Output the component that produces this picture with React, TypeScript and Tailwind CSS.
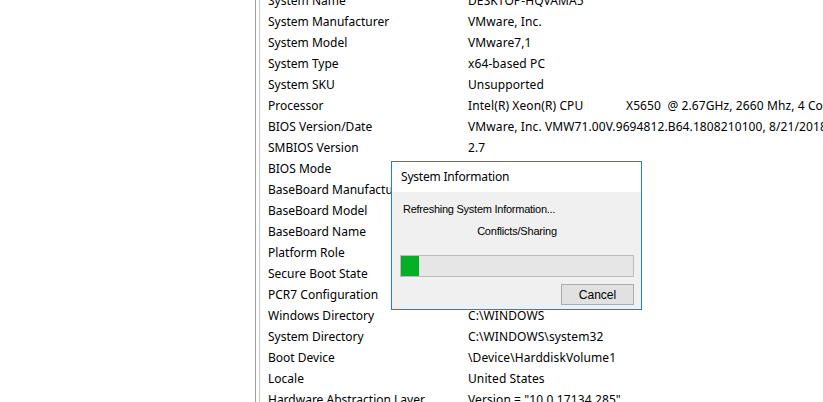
import React from "react";

const rows: [string, React.ReactNode][] = [
  ["System Name", "DESKTOP-HQVAMA5"],
  ["System Manufacturer", "VMware, Inc."],
  ["System Model", "VMware7,1"],
  ["System Type", "x64-based PC"],
  ["System SKU", "Unsupported"],
  [
    "Processor",
    <span className="whitespace-pre">
      <span className="inline-block w-[158px]">Intel(R) Xeon(R) CPU</span>
      {"X5650  @ 2.67GHz, 2660 Mhz, 4 Core(s), 4 Logical Processor(s)"}
    </span>,
  ],
  ["BIOS Version/Date", "VMware, Inc. VMW71.00V.9694812.B64.1808210100, 8/21/2018"],
  ["SMBIOS Version", "2.7"],
  ["BIOS Mode", "Legacy"],
  ["BaseBoard Manufacturer", "Intel Corporation"],
  ["BaseBoard Model", "Not Available"],
  ["BaseBoard Name", "Base Board"],
  ["Platform Role", "Desktop"],
  ["Secure Boot State", "Unsupported"],
  ["PCR7 Configuration", "Binding Not Possible"],
  ["Windows Directory", "C:\\WINDOWS"],
  ["System Directory", "C:\\WINDOWS\\system32"],
  ["Boot Device", "\\Device\\HarddiskVolume1"],
  ["Locale", "United States"],
  ["Hardware Abstraction Layer", 'Version = "10.0.17134.285"'],
];

export default function App() {
  return (
    <div className="relative w-[823px] h-[402px] overflow-hidden bg-white flex text-black">
      <div className="w-[255px] shrink-0 bg-white" />
      <div className="w-px shrink-0 bg-[#a0a0a0]" />
      <div className="w-[3px] shrink-0 bg-white" />
      <div className="w-px shrink-0 bg-[#c8c8c8]" />
      <div
        className="flex-1 min-w-0 overflow-hidden pl-[8px] -mt-[10px] text-[12px] whitespace-nowrap"
        style={{ fontFamily: '"Segoe UI", "Noto Sans", sans-serif' }}
      >
        {rows.map(([k, v], i) => (
          <div key={i} className="flex h-[21px] items-center">
            <div className="w-[200px] shrink-0 overflow-hidden">{k}</div>
            <div className="whitespace-pre tracking-[0.1px]">{v}</div>
          </div>
        ))}
      </div>

      <div className="absolute left-[391px] top-[161px] w-[251px] h-[149px] border border-[#1883d7] bg-[#f0f0f0] flex flex-col">
        <div
          className="h-[30px] bg-white flex items-center pl-[9px] text-[12px] tracking-[-0.2px]"
          style={{ fontFamily: '"Segoe UI", "Noto Sans", sans-serif' }}
        >
          System Information
        </div>
        <div
          className="flex flex-col text-[11px] pl-[8px] pr-[7px]"
          style={{ fontFamily: '"Liberation Sans", Arial, sans-serif' }}
        >
          <div className="h-[13px] mt-[11px] pl-[3px] leading-[13px] tracking-[-0.25px]">
            Refreshing System Information...
          </div>
          <div className="h-[13px] mt-[9px] text-center leading-[13px] tracking-[-0.2px]">Conflicts/Sharing</div>
          <div className="mt-[17px] h-[22px] w-[234px] border border-[#bcbcbc] bg-[#e6e6e6] flex">
            <div className="w-[18px] h-full bg-[#06b025]" />
          </div>
          <div className="flex justify-end mt-[7px]">
            <div className="w-[73px] h-[21px] border border-[#adadad] bg-[#e1e1e1] flex items-center justify-center text-[12px]">
              Cancel
            </div>
          </div>
        </div>
      </div>
    </div>
  );
}
